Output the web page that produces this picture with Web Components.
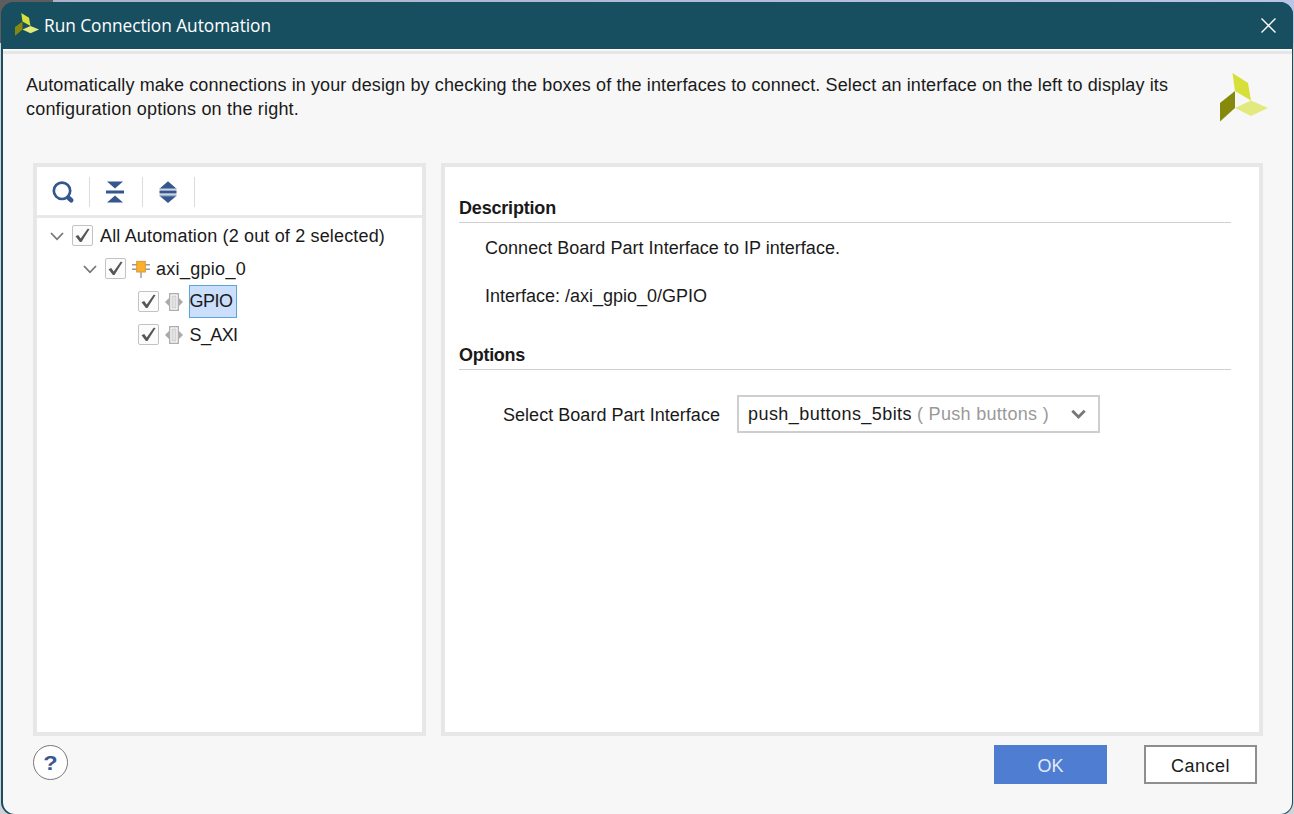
<!DOCTYPE html>
<html lang="en">
<head>
<meta charset="utf-8">
<title>Run Connection Automation</title>
<style>
html,body{margin:0;height:814px;overflow:hidden}
body{background:linear-gradient(#5d5d5d,#5d5d5d) 0 0/53px 43px no-repeat,linear-gradient(90deg,#a9b2c8,#b9c4e6) 0 0/100% 43px no-repeat,#d0d2d6;font:18px "Liberation Sans",Arial,sans-serif;color:#1a1a1a}
</style>
</head>
<body>
<automation-dialog></automation-dialog>
<script>
const define=(name,html,setup)=>customElements.define(name,class extends HTMLElement{
  connectedCallback(){
    if(this.shadowRoot)return;
    const t=document.createElement('template');
    t.innerHTML=html;
    this.attachShadow({mode:'open'}).append(t.content.cloneNode(true));
    if(setup)setup(this,this.shadowRoot);
  }
});

// A single line of text whose letter spacing is tuned to a given width.
define('ui-text',`<style>:host{display:block;white-space:pre;line-height:24px;flex:none}span{display:inline-block}</style><span><slot></slot></span>`,(el,root)=>{
  const w=+el.getAttribute('w');
  if(!w)return;
  const s=root.querySelector('span');
  el.style.width=w+'px';
  s.style.letterSpacing=(w-s.getBoundingClientRect().width)/el.textContent.length+'px';
});

define('brand-logo',`<style>:host{display:block;flex:none}svg{display:block;width:100%;height:100%}</style>
<svg viewBox="0 0 48 49" preserveAspectRatio="none"><path d="M12.5 0 28 10l3 17.5L15 18z" fill="#d6e038"/><path d="M0 30 15 18v17L0 48.5z" fill="#868a0c"/><path d="M15 35 31 27.5 48 35 31 43z" fill="#e3ea7d"/></svg>`);

define('title-bar',`<style>
:host{display:flex;align-items:center;height:47px;flex:none;box-sizing:border-box;background:#174f61;color:#fff;padding:0 16px 0 14px}
brand-logo{width:24px;height:23px;margin:-2px 5px 0 0}
ui-text{font-family:"Open Sans","Noto Sans",sans-serif;font-size:17.3px;margin-top:1px}
svg{margin-left:auto;display:block}
</style><brand-logo></brand-logo><ui-text w="227"><slot></slot></ui-text>
<svg width="17" height="17" viewBox="0 0 17 17"><path d="M1.5 1.5l14 14m0-14l-14 14" stroke="#fff" stroke-width="1.4" fill="none"/></svg>`,(el,root)=>{
  // The slotted title is measured here, because it is not part of the inner element's own text.
  const s=root.querySelector('ui-text').shadowRoot.querySelector('span');
  s.style.letterSpacing='0px';
  s.style.letterSpacing=(227-s.getBoundingClientRect().width)/el.textContent.length+'px';
});

define('ui-panel',`<style>:host{display:flex;flex-direction:column;box-sizing:border-box;border:4px solid #e7e7e7;background:#fff}</style><slot></slot>`);

define('tool-bar',`<style>
:host{display:flex;align-items:center;height:51px;box-sizing:border-box;border-bottom:3px solid #e8e8e8;flex:none}
i{width:53px;height:30px;box-sizing:border-box;border-right:1.5px solid #dcdcdc;display:flex;align-items:center;justify-content:center;margin-top:1px}
i+i{width:53px;padding-right:2px}i+i+i{width:52px}
svg{display:block;flex:none}
</style>
<i><svg width="24" height="24" viewBox="0 0 24 24"><circle cx="11" cy="10.8" r="8.2" fill="none" stroke="#35578f" stroke-width="2.7"/><path d="M17.2 17.6l3 2.6" stroke="#35578f" stroke-width="4.6" stroke-linecap="round"/></svg></i>
<i><svg width="18" height="22" viewBox="0 0 18 22" fill="#35578f"><path d="M1 .5h16L9 7.5zM0 9.5h18v3H0zM1 21.5h16L9 14.5z"/></svg></i>
<i><svg width="18" height="22" viewBox="0 0 18 22" fill="#35578f"><path d="M9 .3 17 7.3H1zM.5 9.6h17v2.8H.5zM1 15.2h16L9 22z"/><path d="M.5 7h17v1.5H.5zM.5 13.6h17v1.9H.5z" opacity=".5"/></svg></i>`);

define('tree-caret',`<style>:host{display:block;width:14px;height:9px;flex:none;margin-top:-1px}svg{display:block}</style><svg width="14" height="9" viewBox="0 0 14 9"><path d="M1 1l6 6.3L13 1" fill="none" stroke="#777" stroke-width="1.8"/></svg>`);
define('check-box',`<style>:host{display:block;box-sizing:border-box;width:21px;height:21px;border:1.5px solid #c3c3c3;border-radius:2px;background:#fcfcfc;flex:none}svg{display:block}</style><svg width="19" height="19" viewBox="0 0 19 19"><path d="M2.5 10.2 5.2 9 7.7 12.4 14.6 2.8 16.6 3 8.5 16 6.9 16z" fill="#575757"/></svg>`);
define('ip-icon',`<style>:host{display:block;width:18px;height:18px;flex:none}svg{display:block}</style><svg width="18" height="18" viewBox="0 0 18 18"><path d="M0 4.7h18M0 9.3h18M9 12v6" stroke="#999" stroke-width="1.4"/><rect x="4.7" y="1.4" width="8.6" height="10.6" fill="#fbb02d" stroke="#d99a35"/></svg>`);
define('port-icon',`<style>:host{display:block;width:18px;height:18px;flex:none;margin-top:-2px}svg{display:block}</style><svg width="18" height="18" viewBox="0 0 18 18"><path d="M0 9l4-4v8zM18 9l-4-4v8z" fill="#aaa"/><rect x="4.7" y=".7" width="8.6" height="16.6" fill="#fff" stroke="#aaa" stroke-width="1.3"/><rect x="7" y="3" width="4" height="12" fill="#e2e2e2" stroke="#c2c2c2" stroke-width=".8"/></svg>`);

define('tree-row',`<style>
:host{display:flex;align-items:center;height:33px}
check-box{margin:-3px 7px 0 8px}
:host([leaf]) check-box{margin-right:6px}
ip-icon{margin:-2px 6px 0 -1px}:host([leaf]) port-icon{margin-right:6px}
.label{border:1px solid transparent}
:host([selected]) .label{background:#cbdefc;border-color:#5ba5db;margin-top:-2px}
.label{margin-left:-1px;padding:0 3px 0 0}
:host([leaf]) .label{margin-left:0}
:host([leaf]) ui-text{margin-left:-.5px}
</style>`,(el,root)=>{
  const kind=el.getAttribute('icon'),box=document.createElement('div');
  box.style.display='contents';
  box.innerHTML=(el.hasAttribute('leaf')?'':'<tree-caret></tree-caret>')+'<check-box></check-box>'+(kind?`<${kind}-icon></${kind}-icon>`:'')+`<div class="label"><ui-text w="${el.getAttribute('w')}" style="line-height:31px">${el.textContent}</ui-text></div>`;
  root.append(box);
});

define('section-title',`<style>:host{display:block;height:27px;border-bottom:1.5px solid #cfcfcf;font-weight:700;box-sizing:border-box}</style><slot></slot>`);
define('combo-box',`<style>:host{display:flex;align-items:center;box-sizing:border-box;width:363px;height:38px;border:2px solid #cecece;background:#fff;padding:0 12px 0 9px}em{font-style:normal;color:#999;margin-left:5px}svg{display:block;margin-left:auto}</style><ui-text w="164">push_buttons_5bits</ui-text><em><ui-text w="132">( Push buttons )</ui-text></em><svg width="15" height="11" viewBox="0 0 15 11"><path d="M1.3 1.7l6.2 6.3 6.2-6.3" fill="none" stroke="#777" stroke-width="2.8"/></svg>`);
define('push-button',`<style>:host{display:flex;align-items:center;justify-content:center;box-sizing:border-box;width:113px;height:39px;background:#fff;border:2px solid #8e8e8e;padding-top:2px}:host([primary]){background:#4f7dd1;border-color:#4f7dd1;color:#e3ebfa}</style><slot></slot>`);
define('help-button',`<style>:host{display:flex;align-items:center;justify-content:center;box-sizing:border-box;width:35px;height:35px;border:1.5px solid #777;border-radius:50%;background:#fff;color:#3a5796;font-weight:700;font-size:21px}span{display:block;transform:scaleX(1.12)}</style><span>?</span>`);

define('automation-dialog',`<style>
:host{display:block;padding:2px 1px 0}
.win{box-sizing:border-box;width:1292px;height:813px;border-radius:13px;overflow:hidden;background:#174f61;display:flex;flex-direction:column}
.body{margin:0 1px 1px 2px;flex:1;border-radius:0 0 12px 12px;background:#f7f7f7;display:flex;flex-direction:column;border-top:1px solid #fff}
.rule{height:3px;background:#e6e6e6;margin-top:1px;flex:none}
header{display:flex;justify-content:space-between;padding:19px 24px 0 23px;height:109px;box-sizing:border-box}
brand-logo{width:48px;height:49px}
main{display:flex;gap:15px;height:573px;padding:0 29px 0 30px}
.left{width:393px;flex:none}.right{width:822px;flex:none}
.tree{padding:2px 13px}
tree-row[d="1"]{padding-left:33px}tree-row[leaf]{padding-left:80px}
.right{padding:28px 28px 0 14px}
.desc{padding:13px 0 0 26px}.desc ui-text+ui-text{margin-top:24px}
.opt{display:flex;align-items:center;gap:17px;padding:26px 0 0 44px}
combo-box{margin:-1px 0 0 0}
footer{display:flex;padding:9px 35px 0 30px;align-items:flex-start}
push-button[primary]{margin-left:auto;margin-right:37px}
</style>
<div class="win"><title-bar>Run Connection Automation</title-bar>
<div class="body"><div class="rule"></div>
<header><div><ui-text w="1142">Automatically make connections in your design by checking the boxes of the interfaces to connect. Select an interface on the left to display its</ui-text><ui-text w="273">configuration options on the right.</ui-text></div><brand-logo></brand-logo></header>
<main><ui-panel class="left"><tool-bar></tool-bar><div class="tree">
<tree-row w="285">All Automation (2 out of 2 selected)</tree-row>
<tree-row d="1" icon="ip" w="90">axi_gpio_0</tree-row>
<tree-row leaf selected icon="port" w="43">GPIO</tree-row>
<tree-row leaf icon="port" w="48">S_AXI</tree-row></div></ui-panel>
<ui-panel class="right"><section-title style="margin-top:1px"><ui-text w="97">Description</ui-text></section-title>
<div class="desc"><ui-text w="355">Connect Board Part Interface to IP interface.</ui-text><ui-text w="222">Interface: /axi_gpio_0/GPIO</ui-text></div>
<section-title style="margin-top:35px"><ui-text w="66">Options</ui-text></section-title>
<div class="opt"><ui-text w="217">Select Board Part Interface</ui-text><combo-box></combo-box></div></ui-panel></main>
<footer><help-button></help-button><push-button primary><ui-text w="26">OK</ui-text></push-button><push-button><ui-text w="59">Cancel</ui-text></push-button></footer>
</div></div>`);
</script>
</body>
</html>
